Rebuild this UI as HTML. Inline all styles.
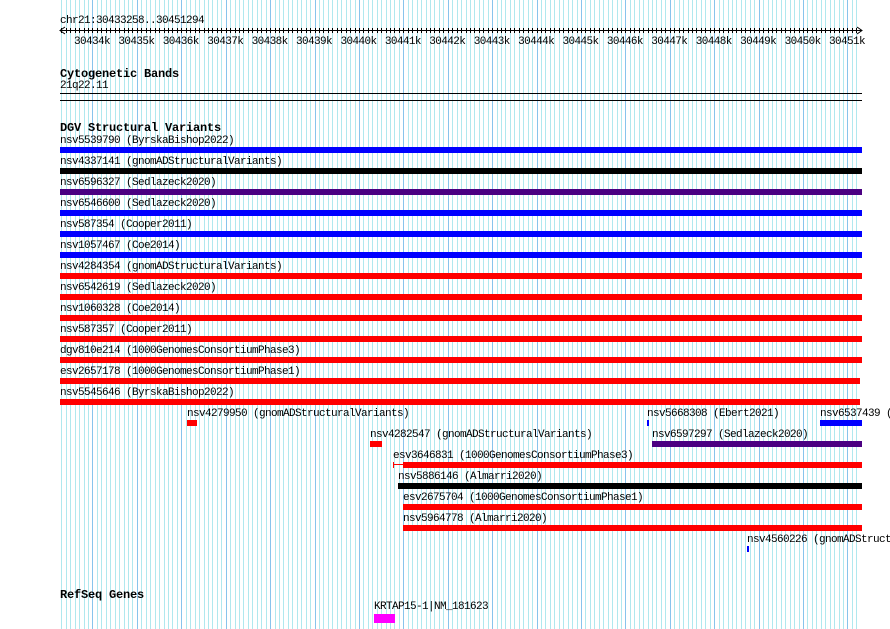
<!DOCTYPE html>
<html style="overflow:hidden"><head><meta charset="utf-8"><style>
html,body{margin:0;width:890px;height:629px;overflow:hidden}
body{background:#fff;position:relative;font-family:"Liberation Mono",monospace;font-size:10px;color:#000}
.t{position:absolute;white-space:pre;line-height:11px;font-size:11px;letter-spacing:-0.6px;margin-top:2px}
.h{position:absolute;white-space:pre;font-weight:bold;font-size:12px;letter-spacing:-0.2px;line-height:12px}
.b{position:absolute;height:6px}
.r{background:#f00}.bl{background:#00f}.k{background:#000}.p{background:#4b0082}
</style></head><body>
<svg style="position:absolute;left:0;top:0" width="890" height="629"><g id="grid" shape-rendering="crispEdges"></g></svg>
<div class="t" style="left:60px;top:14px">chr21:30433258..30451294</div>
<svg style="position:absolute;left:0;top:0" width="890" height="40">
<line x1="60" y1="30.5" x2="862" y2="30.5" stroke="#000"/>
<polyline points="65,27 60,30.5 65,34" fill="none" stroke="#000"/>
<polyline points="857,27 862,30.5 857,34" fill="none" stroke="#000"/>
<g stroke="#000" id="tk" shape-rendering="crispEdges"></g>
</svg>
<div id="labels"></div>
<div class="h" style="left:60px;top:68px">Cytogenetic Bands</div>
<div class="t" style="left:60px;top:79px">21q22.11</div>
<div style="position:absolute;left:60px;top:93px;width:802px;height:1px;background:#000"></div>
<div style="position:absolute;left:60px;top:100px;width:802px;height:1px;background:#000"></div>
<div class="h" style="left:60px;top:122px">DGV Structural Variants</div>

<div class="t" style="left:60px;top:134px">nsv5539790 (ByrskaBishop2022)</div><div class="b bl" style="left:60px;top:147px;width:802px"></div>
<div class="t" style="left:60px;top:155px">nsv4337141 (gnomADStructuralVariants)</div><div class="b k" style="left:60px;top:168px;width:802px"></div>
<div class="t" style="left:60px;top:176px">nsv6596327 (Sedlazeck2020)</div><div class="b p" style="left:60px;top:189px;width:802px"></div>
<div class="t" style="left:60px;top:197px">nsv6546600 (Sedlazeck2020)</div><div class="b bl" style="left:60px;top:210px;width:802px"></div>
<div class="t" style="left:60px;top:218px">nsv587354 (Cooper2011)</div><div class="b bl" style="left:60px;top:231px;width:802px"></div>
<div class="t" style="left:60px;top:239px">nsv1057467 (Coe2014)</div><div class="b bl" style="left:60px;top:252px;width:802px"></div>
<div class="t" style="left:60px;top:260px">nsv4284354 (gnomADStructuralVariants)</div><div class="b r" style="left:60px;top:273px;width:802px"></div>
<div class="t" style="left:60px;top:281px">nsv6542619 (Sedlazeck2020)</div><div class="b r" style="left:60px;top:294px;width:802px"></div>
<div class="t" style="left:60px;top:302px">nsv1060328 (Coe2014)</div><div class="b r" style="left:60px;top:315px;width:802px"></div>
<div class="t" style="left:60px;top:323px">nsv587357 (Cooper2011)</div><div class="b r" style="left:60px;top:336px;width:802px"></div>
<div class="t" style="left:60px;top:344px">dgv810e214 (1000GenomesConsortiumPhase3)</div><div class="b r" style="left:60px;top:357px;width:802px"></div>
<div class="t" style="left:60px;top:365px">esv2657178 (1000GenomesConsortiumPhase1)</div><div class="b r" style="left:60px;top:378px;width:800px"></div>
<div class="t" style="left:60px;top:386px">nsv5545646 (ByrskaBishop2022)</div><div class="b r" style="left:60px;top:399px;width:800px"></div>

<div class="t" style="left:187px;top:407px">nsv4279950 (gnomADStructuralVariants)</div><div class="b r" style="left:187px;top:420px;width:10px"></div>
<div class="t" style="left:647px;top:407px">nsv5668308 (Ebert2021)</div><div class="b bl" style="left:647px;top:420px;width:2px"></div>
<div class="t" style="left:820px;top:407px">nsv6537439 (</div><div class="b bl" style="left:820px;top:420px;width:42px"></div>
<div class="t" style="left:370px;top:428px">nsv4282547 (gnomADStructuralVariants)</div><div class="b r" style="left:370px;top:441px;width:12px"></div>
<div class="t" style="left:652px;top:428px">nsv6597297 (Sedlazeck2020)</div><div class="b p" style="left:652px;top:441px;width:210px"></div>
<div class="t" style="left:393px;top:449px">esv3646831 (1000GenomesConsortiumPhase3)</div>
<div style="position:absolute;left:393px;top:462px;width:1px;height:6px;background:#f00"></div>
<div style="position:absolute;left:393px;top:464px;width:10px;height:1px;background:#f00"></div>
<div class="b r" style="left:403px;top:462px;width:459px"></div>
<div class="t" style="left:398px;top:470px">nsv5886146 (Almarri2020)</div><div class="b k" style="left:398px;top:483px;width:464px"></div>
<div class="t" style="left:403px;top:491px">esv2675704 (1000GenomesConsortiumPhase1)</div><div class="b r" style="left:403px;top:504px;width:459px"></div>
<div class="t" style="left:403px;top:512px">nsv5964778 (Almarri2020)</div><div class="b r" style="left:403px;top:525px;width:459px"></div>
<div class="t" style="left:747px;top:533px">nsv4560226 (gnomADStruct</div><div class="b bl" style="left:747px;top:546px;width:2px"></div>

<div class="h" style="left:60px;top:589px">RefSeq Genes</div>
<div class="t" style="left:374px;top:600px">KRTAP15-1|NM_181623</div>
<div class="b" style="left:374px;top:614px;width:21px;height:9px;background:#f0f"></div>
<script>
var g=document.getElementById('tk'),s='',gs='';
var i=0;
for(var x=61.9;x<858;x+=4.441){var X=Math.floor(x)+0.5;s+='<line x1="'+X+'" y1="28" x2="'+X+'" y2="33"/>';
 var dark=((i-7)%10===0);
 gs+='<line x1="'+X+'" y1="0" x2="'+X+'" y2="629" stroke="'+(dark?'#88c4ec':'#b0e8ee')+'"/>';i++;}
g.innerHTML=s;
document.getElementById('grid').innerHTML=gs;
var L=document.getElementById('labels'),h='';
for(var j=0;j<18;j++){var x=93+j*44.41;h+='<div class="t" style="left:'+(x-19).toFixed(1)+'px;top:35px">'+(30434+j)+'k</div>';}
L.innerHTML=h;
</script>
</body></html>
